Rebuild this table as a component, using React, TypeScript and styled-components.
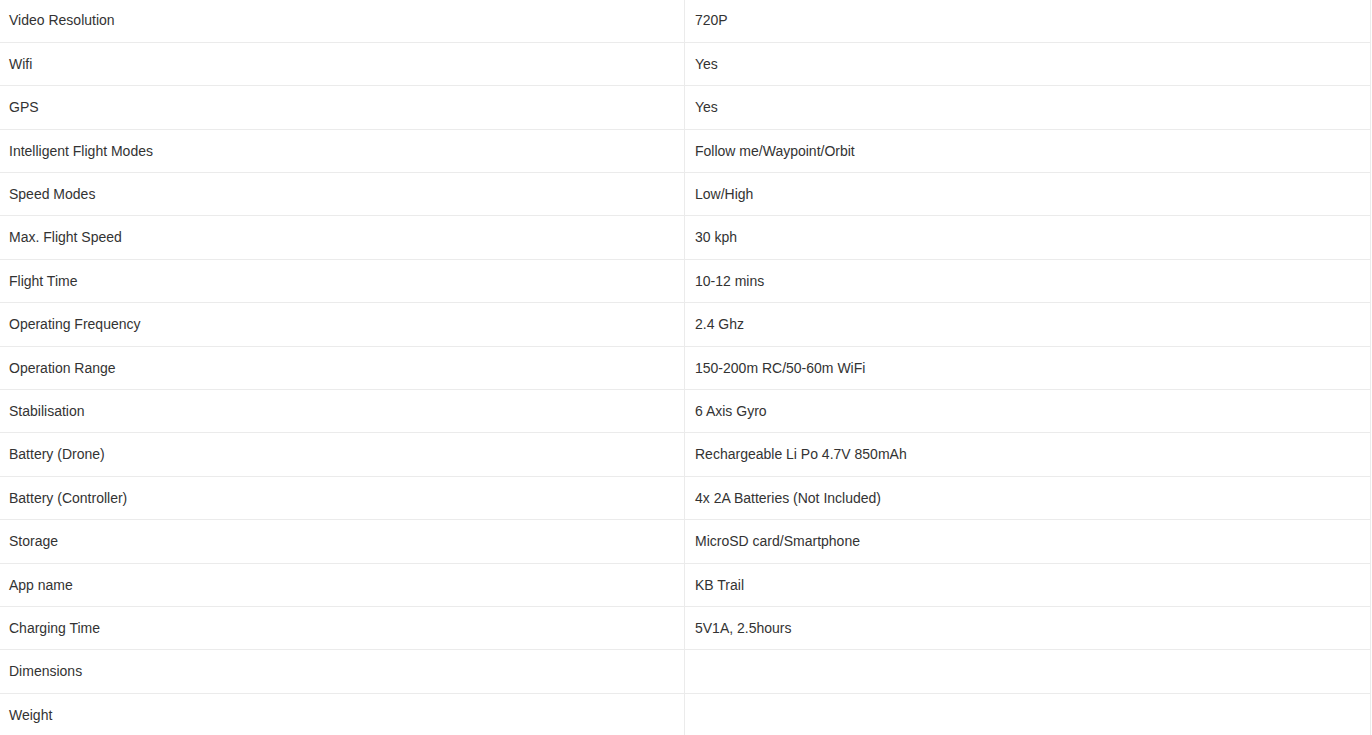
import React from 'react';
import styled, { createGlobalStyle } from 'styled-components';

const GlobalStyle = createGlobalStyle`
  html, body {
    margin: 0;
    padding: 0;
    background: #fff;
  }
  body {
    font-family: "Liberation Sans", Arial, Helvetica, sans-serif;
    font-size: 14px;
    color: #333;
  }
`;

const SpecsTable = styled.table`
  width: 1371px;
  margin-top: -0.7px;
  border-collapse: separate;
  border-spacing: 0;
  table-layout: fixed;
`;

const Cell = styled.td<{ $first?: boolean }>`
  box-sizing: border-box;
  width: ${(p) => (p.$first ? '685px' : '686px')};
  padding: 12px ${(p) => (p.$first ? '9px' : '10px')};
  line-height: 18.4px;
  vertical-align: top;
  border-right: 1px solid #ebebeb;
  border-bottom: 1px solid #ebebeb;
`;

const specs: [string, string][] = [
  ['Video Resolution', '720P'],
  ['Wifi', 'Yes'],
  ['GPS', 'Yes'],
  ['Intelligent Flight Modes', 'Follow me/Waypoint/Orbit'],
  ['Speed Modes', 'Low/High'],
  ['Max. Flight Speed', '30 kph'],
  ['Flight Time', '10-12 mins'],
  ['Operating Frequency', '2.4 Ghz'],
  ['Operation Range', '150-200m RC/50-60m WiFi'],
  ['Stabilisation', '6 Axis Gyro'],
  ['Battery (Drone)', 'Rechargeable Li Po 4.7V 850mAh'],
  ['Battery (Controller)', '4x 2A Batteries (Not Included)'],
  ['Storage', 'MicroSD card/Smartphone'],
  ['App name', 'KB Trail'],
  ['Charging Time', '5V1A, 2.5hours'],
  ['Dimensions', ''],
  ['Weight', ''],
];

const App: React.FC = () => {
  return (
    <>
      <GlobalStyle />
      <SpecsTable>
        <tbody>
          {specs.map(([label, value]) => (
            <tr key={label}>
              <Cell $first>{label}</Cell>
              <Cell>{value}</Cell>
            </tr>
          ))}
        </tbody>
      </SpecsTable>
    </>
  );
};

export default App;
